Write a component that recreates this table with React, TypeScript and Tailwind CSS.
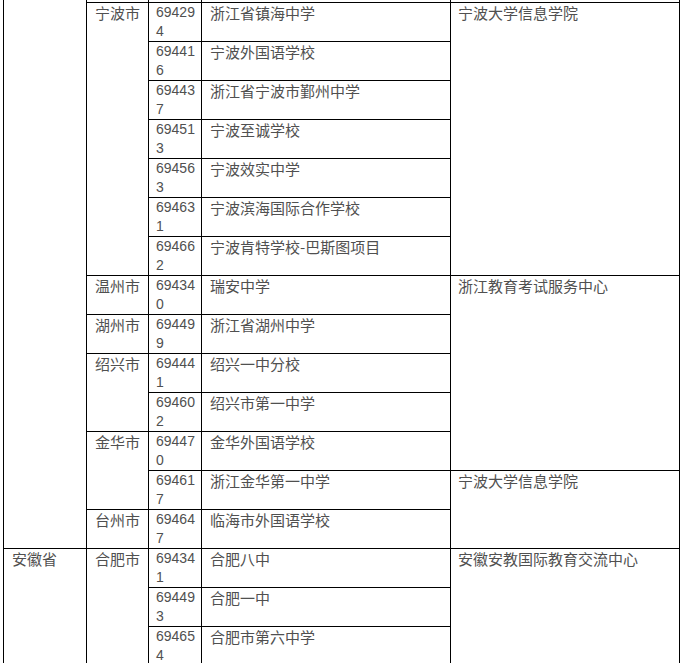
import React from "react";

type Row = {
  city?: { name: string; span: number };
  code: string;
  school: string;
  center?: { name: string; span: number };
};

const zhejiang: Row[] = [
  { city: { name: "宁波市", span: 7 }, code: "694294", school: "浙江省镇海中学", center: { name: "宁波大学信息学院", span: 7 } },
  { code: "694416", school: "宁波外国语学校" },
  { code: "694437", school: "浙江省宁波市鄞州中学" },
  { code: "694513", school: "宁波至诚学校" },
  { code: "694563", school: "宁波效实中学" },
  { code: "694631", school: "宁波滨海国际合作学校" },
  { code: "694662", school: "宁波肯特学校-巴斯图项目" },
  { city: { name: "温州市", span: 1 }, code: "694340", school: "瑞安中学", center: { name: "浙江教育考试服务中心", span: 5 } },
  { city: { name: "湖州市", span: 1 }, code: "694499", school: "浙江省湖州中学" },
  { city: { name: "绍兴市", span: 2 }, code: "694441", school: "绍兴一中分校" },
  { code: "694602", school: "绍兴市第一中学" },
  { city: { name: "金华市", span: 2 }, code: "694470", school: "金华外国语学校" },
  { code: "694617", school: "浙江金华第一中学", center: { name: "宁波大学信息学院", span: 2 } },
  { city: { name: "台州市", span: 1 }, code: "694647", school: "临海市外国语学校" },
];

const anhui: Row[] = [
  { city: { name: "合肥市", span: 3 }, code: "694341", school: "合肥八中", center: { name: "安徽安教国际教育交流中心", span: 3 } },
  { code: "694493", school: "合肥一中" },
  { code: "694654", school: "合肥市第六中学" },
];

const cell = "border border-black align-top p-0 pl-[7px] leading-[19px]";

function Rows({ rows, province }: { rows: Row[]; province?: React.ReactNode }) {
  return (
    <>
      {rows.map((r, i) => (
        <tr key={r.code} className="h-[39px]">
          {i === 0 && province}
          {r.city && (
            <td rowSpan={r.city.span} className={cell + " pl-[8px]"}>
              {r.city.name}
            </td>
          )}
          <td className={cell + " font-['Liberation_Sans',sans-serif] text-[14px]"}>
            <div className="h-[19px]">{r.code.slice(0, 5)}</div>
            <div className="h-[19px]">{r.code.slice(5)}</div>
          </td>
          <td className={cell + " pl-[8px]"}>{r.school}</td>
          {r.center && (
            <td rowSpan={r.center.span} className={cell}>
              {r.center.name}
            </td>
          )}
        </tr>
      ))}
    </>
  );
}

export default function App() {
  return (
    <div className="h-[663px] w-[683px] overflow-hidden bg-white">
      <table className="ml-[3px] w-[676px] table-fixed border-collapse text-[15px] text-[#505050] font-['Noto_Sans_CJK_SC','Noto_Sans',sans-serif]">
        <colgroup>
          <col className="w-[83px]" />
          <col className="w-[62px]" />
          <col className="w-[53px]" />
          <col className="w-[249px]" />
          <col className="w-[229px]" />
        </colgroup>
        <tbody>
          <tr className="h-[2px]">
            <td rowSpan={15} className="border border-t-0 border-black p-0 align-top" />
            <td className="border border-t-0 border-black p-0" />
            <td className="border border-t-0 border-black p-0" />
            <td className="border border-t-0 border-black p-0" />
            <td className="border border-t-0 border-black p-0" />
          </tr>
          <Rows rows={zhejiang} />
          <Rows
            rows={anhui}
            province={
              <td rowSpan={3} className={cell + " pl-[8px]"}>
                安徽省
              </td>
            }
          />
        </tbody>
      </table>
    </div>
  );
}
